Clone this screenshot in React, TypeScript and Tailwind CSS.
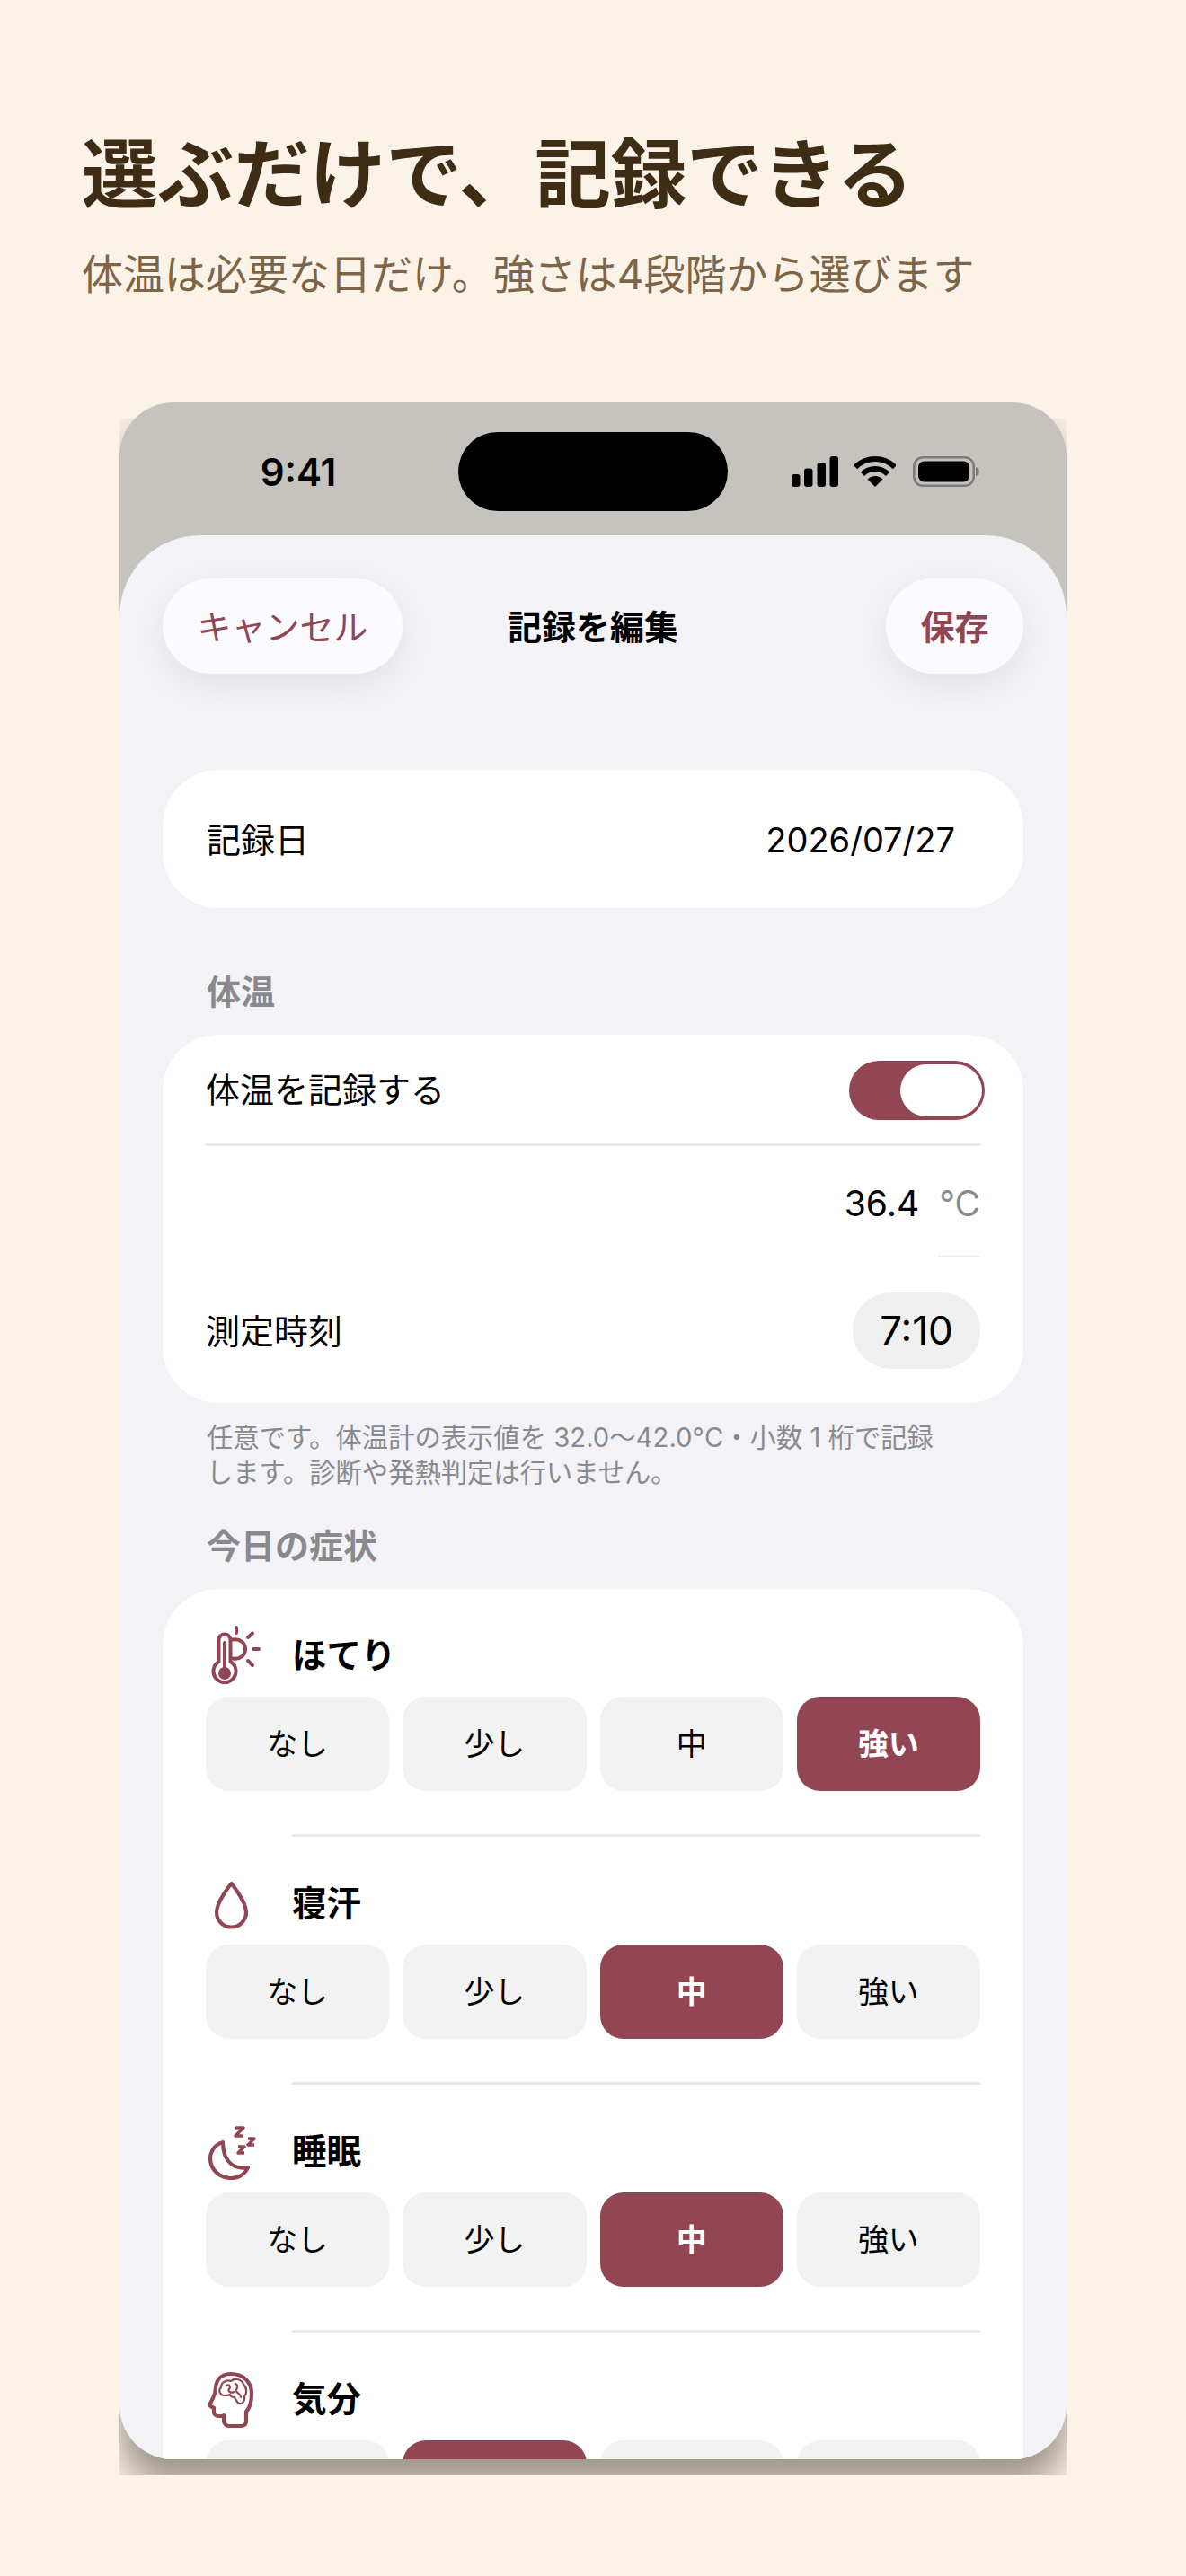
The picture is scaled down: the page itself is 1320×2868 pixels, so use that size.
const levels = ['なし', '少し', '中', '強い']

function HotFlashIcon() {
  return (
    <svg viewBox="0 3 80 80" className="h-20 w-20 shrink-0" fill="none" stroke="#924654" strokeWidth="4" strokeLinecap="round">
      <path d="M17.500 49V25a6.500 6.500 0 0 1 13 0v24a12.500 12.500 0 1 1-13 0Z" />
      <path d="M24 28v28" />
      <circle cx="24" cy="62" r="7" fill="#924654" stroke="none" />
      <path d="M33 24.500c8-1.500 14 3.500 14 10.500s-6 12-14 10.500" />
      <path d="M37 11v6M50 22l5-4.500M56 35h6M50 48l5 5" />
    </svg>
  )
}

function DropIcon() {
  return (
    <svg viewBox="0 0 80 80" className="h-20 w-20 shrink-0" fill="none" stroke="#924654" strokeWidth="4.200" strokeLinejoin="round">
      <path d="M31.500 17C31.500 17 15 37 15 49a16.500 16.500 0 0 0 33 0C48 37 31.500 17 31.500 17Z" />
    </svg>
  )
}

function SleepIcon() {
  return (
    <svg viewBox="0 0 80 80" className="h-20 w-20 shrink-0" fill="none" stroke="#924654" strokeLinejoin="round">
      <path strokeWidth="4.200" d="M22 29C11 32 8 42 8 47c0 13 11 22 23 22 9 0 16-5 19-12-14 3-28-5-28-28Z" />
      <path strokeWidth="3.500" d="M36 13h9l-9 9h9M50 25h7l-7 7h7M39 34h7l-7 7h7" />
    </svg>
  )
}

function MoodIcon() {
  return (
    <svg viewBox="0 -3 80 80" className="h-20 w-20 shrink-0" fill="none" stroke="#924654" strokeLinecap="round" strokeLinejoin="round">
      <path strokeWidth="4.200" d="M23 54v6c0 4 3 6 7 6h12c4 0 6-2 6-6V50c4-4 6-12 6-20C54 16 44 8 31 8 21 8 15 14 14 23c0 5-1 8-3 12l-3 6c-1 2 0 3 2 4l2 1v4c0 3 2 5 5 5h6" />
      <path strokeWidth="2.200" d="M24 32c-6 0-7-7-4-9 0-6 7-9 11-7 4-4 13-2 14 4 4 3 4 10 1 13 1 6-3 9-6 8-3-2-4-5-5-7-4 0-5-3-5-3-2 1-4 1-6 1Z" />
      <path strokeWidth="2.200" d="M26 21c3-2 5 1 3 4-2 2 2 5 5 3M36 19c3 1 3 5 0 7 2 4 6 4 6 8" />
    </svg>
  )
}

const symptoms = [
  { name: 'ほてり', icon: <HotFlashIcon />, selected: 3, labelled: true },
  { name: '寝汗', icon: <DropIcon />, selected: 2, labelled: true },
  { name: '睡眠', icon: <SleepIcon />, selected: 2, labelled: true },
  // only the top of this row's buttons is on screen
  { name: '気分', icon: <MoodIcon />, selected: 1, labelled: false },
]

function StatusIcons() {
  return (
    <div className="flex items-center gap-[18px] pl-[71px]">
      <svg width="52" height="34" viewBox="0 0 52 34" fill="#000">
        <rect x="0" y="20" width="9.500" height="14" rx="3" />
        <rect x="14" y="13.500" width="9.500" height="20.500" rx="3" />
        <rect x="28.500" y="7" width="9.500" height="27" rx="3" />
        <rect x="42.500" y="0" width="9.500" height="34" rx="3" />
      </svg>
      <svg width="46" height="34" viewBox="0 0 46 34" fill="none" stroke="#000" strokeWidth="6">
        <path d="M1.100 12.100A31 31 0 0 1 44.900 12.100" />
        <path d="M8.900 19.900A20 20 0 0 1 37.100 19.900" />
        <path d="M23 34 14.500 25.500A12 12 0 0 1 31.500 25.500Z" fill="#000" stroke="none" />
      </svg>
      <svg width="74" height="34" viewBox="0 0 74 34" className="ml-px">
        <rect x="1.250" y="1.250" width="66.500" height="31.500" rx="10" fill="none" stroke="#7d7a77" strokeWidth="2.500" />
        <rect x="6" y="5.500" width="57" height="23" rx="6.500" fill="#000" />
        <path d="M70 12c2.500.5 4 2.500 4 5s-1.500 4.500-4 5Z" fill="#7d7a77" />
      </svg>
    </div>
  )
}

export default function App() {
  return (
    <div className="h-[2868px] w-[1320px] overflow-hidden bg-[#fbf3e8] font-[Inter,'Noto_Sans_CJK_JP',sans-serif]">
      <div className="pl-[91px] pt-[144px]">
        <h1 className="text-[84.6px] font-bold leading-[100px] text-[#3f2c14]">選ぶだけで、記録できる</h1>
        <p className="mt-[31px] text-[46px] leading-[60px] text-[#7f6547]">体温は必要な日だけ。強さは4段階から選びます</p>
      </div>

      <div className="relative mx-auto mt-[113px] w-[1054px]">
        {/* screenshot's own drop shadow, cut off by its rectangular edge */}
        <div className="absolute inset-x-0 bottom-[-18px] top-[18px] overflow-hidden">
          <div className="absolute inset-x-0 bottom-[18px] top-[-18px] rounded-[60px] shadow-[0_34px_36px_rgba(90,80,70,0.52),0_0_24px_rgba(90,80,70,0.12)]" />
        </div>

        <div className="relative h-[2290px] overflow-hidden rounded-[60px] bg-[#c6c2be]">
          <div className="flex h-[148px] pt-[33px]">
            <div className="flex h-[88px] w-[377px] items-center justify-center pl-[21px] text-[42px] font-semibold text-black">9:41</div>
            <div className="h-[88px] w-[300px] rounded-full bg-black" />
            <div className="flex h-[88px] w-[377px] items-center">
              <StatusIcons />
            </div>
          </div>

          <div className="h-[2142px] overflow-hidden rounded-t-[90px] bg-[#f2f2f7] px-[48px] pt-[48px]">
            <div className="grid grid-cols-[1fr_auto_1fr] items-center">
              <button className="flex h-[106px] w-[267px] items-center justify-center justify-self-start rounded-full bg-[#fbfaff] pt-[2px] text-[38px] text-[#924654] shadow-[0_12px_44px_rgba(0,0,0,0.07)]">キャンセル</button>
              <div className="pt-[2px] text-[38px] font-semibold text-black">記録を編集</div>
              <button className="flex h-[106px] w-[153px] items-center justify-center justify-self-end rounded-full bg-[#fbfaff] pt-[2px] text-[38px] font-semibold text-[#924654] shadow-[0_12px_44px_rgba(0,0,0,0.07)]">保存</button>
            </div>

            <div className="mt-[107px] flex h-[154px] items-center justify-between rounded-[62px] bg-white pl-[49px] pr-[76px] pt-[2px] text-[38px] text-black">
              <span>記録日</span>
              <span>2026/07/27</span>
            </div>

            <h2 className="ml-[49px] mt-[71px] text-[38px] font-bold leading-[44px] text-[#8a8a8e]">体温</h2>
            <div className="mt-[26px] h-[410px] rounded-[62px] bg-white px-[48px]">
              <div className="flex h-[124px] items-center justify-between border-b-[3px] border-[#e8e8e8] pt-[2px] text-[38px] text-black">
                <span>体温を記録する</span>
                <div className="-mr-[5px] flex h-[66px] w-[151px] items-center justify-end rounded-full bg-[#924654] pr-[3px]">
                  <div className="h-[58px] w-[91px] rounded-full bg-white" />
                </div>
              </div>
              <div className="flex h-[124px] flex-col items-end pt-[40px]">
                <div className="flex items-center text-[39px] leading-[48px]">
                  <span className="text-black">36.4</span>
                  <span className="ml-[22px] text-[#8a8a8e]">°C</span>
                </div>
                <div className="mt-[34px] h-[2px] w-[47px] bg-[#e8e8e8]" />
              </div>
              <div className="flex h-[162px] items-center justify-between text-[38px] text-black">
                <span className="pt-[2px]">測定時刻</span>
                <div className="flex h-[85px] w-[142px] items-center justify-center rounded-[42px] bg-[#efefef] text-[44px]">7:10</div>
              </div>
            </div>

            <p className="ml-[49px] mt-[19px] text-[29.3px] leading-[39px] text-[#8a8a8e]">
              任意です。体温計の表示値を 32.0〜42.0°C・小数 1 桁で記録
              <br />
              します。診断や発熱判定は行いません。
            </p>

            <h2 className="ml-[49px] mt-[40px] text-[38px] font-bold leading-[44px] text-[#8a8a8e]">今日の症状</h2>
            <div className="mt-[26px] rounded-t-[62px] bg-white px-[48px]">
              {symptoms.map((s) => (
                <div key={s.name} className="pt-[37px]">
                  <div className="flex h-[76px] items-center">
                    <div className="flex w-[96px] -translate-x-[3px] items-center">{s.icon}</div>
                    <span className="text-[38.5px] font-bold text-black">{s.name}</span>
                  </div>
                  <div className="mt-[7px] grid grid-cols-4 gap-[15px]">
                    {levels.map((l, i) => (
                      <button
                        key={l}
                        className={
                          i === s.selected
                            ? 'flex h-[105px] items-center justify-center rounded-[26px] bg-[#924654] text-[34px] font-bold text-white'
                            : 'flex h-[105px] items-center justify-center rounded-[26px] bg-[#f2f2f2] text-[34px] text-black'
                        }
                      >
                        {s.labelled ? l : null}
                      </button>
                    ))}
                  </div>
                  <div className="ml-[96px] mt-[48px] h-[3px] bg-[#e8e8e8]" />
                </div>
              ))}
            </div>
          </div>
        </div>
      </div>
    </div>
  )
}
